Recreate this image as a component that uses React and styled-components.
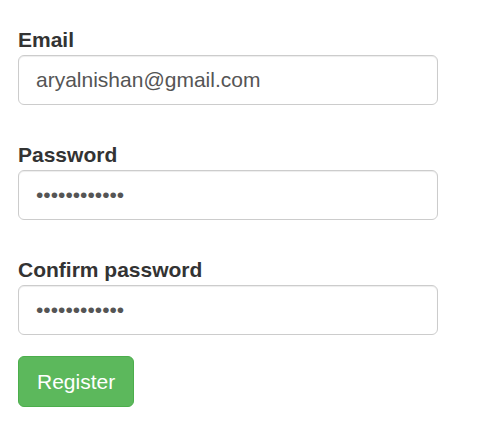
import styled, { createGlobalStyle } from "styled-components";

const GlobalStyle = createGlobalStyle`
  body {
    margin: 0;
    background: #fff;
    font-family: "Liberation Sans", Arial, sans-serif;
    color: #333;
  }
`;

const Form = styled.form`
  display: flex;
  flex-direction: column;
  align-items: flex-start;
  padding: 28px 0 0 18px;
`;

const FormGroup = styled.div`
  display: flex;
  flex-direction: column;
  margin-bottom: ${(props) => (props.last ? "21px" : "38px")};
`;

const Label = styled.label`
  font-size: 21px;
  font-weight: bold;
  line-height: 24px;
  margin-bottom: 3px;
  color: #333;
`;

const Input = styled.input`
  box-sizing: border-box;
  width: 420px;
  height: 50px;
  padding: 0 17px;
  font-family: "Liberation Sans", Arial, sans-serif;
  font-size: 21px;
  color: #555;
  background: #fff;
  border: 1px solid #ccc;
  border-radius: 6px;
  box-shadow: inset 0 1px 1px rgba(0, 0, 0, 0.075);
  outline: none;
`;

const Button = styled.button`
  box-sizing: border-box;
  height: 51px;
  padding: 0 18px;
  font-family: "Liberation Sans", Arial, sans-serif;
  font-size: 21px;
  color: #fff;
  background: #5cb85c;
  border: 1px solid #4cae4c;
  border-radius: 6px;
  cursor: pointer;
`;

const fields = [
  { id: "email", label: "Email", type: "email", value: "aryalnishan@gmail.com" },
  { id: "password", label: "Password", type: "password", value: "secretpass12" },
  { id: "confirm", label: "Confirm password", type: "password", value: "secretpass12" },
];

const App = () => {
  return (
    <>
      <GlobalStyle />
      <Form onSubmit={(e) => e.preventDefault()}>
        {fields.map((field, idx) => (
          <FormGroup key={field.id} last={idx === fields.length - 1}>
            <Label htmlFor={field.id}>{field.label}</Label>
            <Input id={field.id} type={field.type} defaultValue={field.value} />
          </FormGroup>
        ))}
        <Button type="submit">Register</Button>
      </Form>
    </>
  );
};

export default App;
